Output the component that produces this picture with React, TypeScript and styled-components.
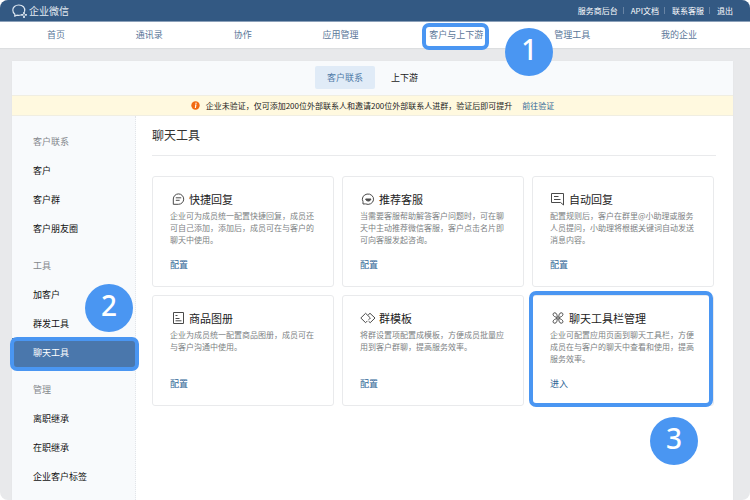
import React from "react";
import styled, { createGlobalStyle, css } from "styled-components";

const accent = "#4a96f2";
const linkBlue = "#2f6596";

const GlobalStyle = createGlobalStyle`
  * { box-sizing: border-box; }
  body {
    margin: 0;
    background: #fff;
    font-family: "Noto Sans CJK SC", "Noto Sans", sans-serif;
    font-size: 9px;
    color: #222;
  }
  a { color: inherit; text-decoration: none; }
  button { font: inherit; border: 0; background: none; padding: 0; cursor: pointer; }
  h1, h2, h3, p, ul { margin: 0; padding: 0; font-weight: 400; list-style: none; }
`;

const Page = styled.div`
  min-height: 100vh;
  display: flex;
  flex-direction: column;
  background: #e8e9eb;
  border-radius: 8px;
  overflow: hidden;
`;

const Header = styled.header`
  display: flex;
  align-items: center;
  justify-content: space-between;
  height: 22px;
  padding: 0 17px 0 12px;
  background: #335983;
  border-bottom: 1px solid #8ba0b9;
  color: #fff;
`;

const Brand = styled.a`
  display: flex;
  align-items: center;
  gap: 1px;
  font-size: 10px;
  line-height: 20px;
  color: #e3eaf2;
`;

const TopLinks = styled.ul`
  display: flex;
  align-items: center;
  font-size: 8px;
  line-height: 20px;
`;

const TopItem = styled.li`
  display: flex;
  align-items: center;
  & + &::before {
    content: "";
    height: 7px;
    margin: 0 7px 0 5px;
    border-left: 1px solid #6884a4;
  }
`;

const MainNav = styled.nav`
  display: flex;
  align-items: center;
  justify-content: space-between;
  height: 26px;
  padding: 0 53px 0 47px;
  background: #fff;
  box-shadow: 0 1px 1px #dcdee0;
  color: #5b7799;
`;

const NavLink = styled.a`
  position: relative;
  line-height: 26px;
`;

const Panel = styled.div`
  flex: 1;
  display: flex;
  flex-direction: column;
  margin: 13px 17px 0 12px;
  background: #fff;
  border-radius: 2px 2px 0 0;
  box-shadow: 0 0 1px #cfd2d6;
`;

const Tabs = styled.div`
  display: flex;
  justify-content: center;
  align-items: center;
  gap: 4px;
  height: 34px;
  padding-bottom: 1px;
  background: #f8fafc;
`;

const Tab = styled.button<{ $active?: boolean }>`
  height: 23px;
  padding: 0 12px;
  border-radius: 2px;
  color: ${(p) => (p.$active ? "#507ba8" : "#222")};
  ${(p) => p.$active && css`background: #e0ebf7;`}
`;

const Notice = styled.div`
  display: flex;
  justify-content: center;
  align-items: center;
  height: 21px;
  background: #fff9df;
  border: solid #f0eee2;
  border-width: 1px 0;
  font-size: 8px;
  svg { margin-right: 6px; }
  a { margin-left: 10px; color: ${linkBlue}; }
`;

const Body = styled.div`
  flex: 1;
  display: flex;
`;

const Sidebar = styled.aside`
  flex: none;
  width: 124px;
  padding: 11px 0 8px;
  background: #f8fafc;
  border-right: 1px dotted #e2e5e9;
`;

const Group = styled.section`
  & + & { margin-top: 8px; }
`;

const GroupTitle = styled.h2`
  padding-left: 21px;
  font-size: 9px;
  line-height: 29px;
  color: #85888c;
`;

const SideLink = styled.a<{ $active?: boolean }>`
  display: block;
  position: relative;
  padding-left: 21px;
  line-height: 29px;
  color: ${(p) => (p.$active ? "#fff" : "#111")};
  ${(p) => p.$active && css`background: #4a77ac;`}
`;

const Content = styled.main`
  flex: 1;
  min-width: 0;
  padding: 0 17px 16px 16px;
`;

const Title = styled.h1`
  height: 40px;
  font-size: 12px;
  line-height: 38px;
  color: #333;
  border-bottom: 1px solid #e9eaec;
`;

const Cards = styled.div`
  display: grid;
  grid-template-columns: repeat(3, 1fr);
  gap: 8px;
  margin: 20px 2px 0 0;
`;

const Card = styled.article`
  position: relative;
  display: flex;
  flex-direction: column;
  align-items: flex-start;
  min-height: 111px;
  padding: 12px 17px;
  border: 1px solid #e9eaec;
  border-radius: 3px;
`;

const CardTitle = styled.h3`
  display: flex;
  align-items: center;
  gap: 3px;
  font-size: 11px;
  line-height: 20px;
  color: #222;
  svg { flex: none; }
`;

const CardText = styled.p`
  min-height: 36px;
  margin-top: 1px;
  font-size: 8px;
  line-height: 12px;
  color: #7c7f83;
`;

const CardLink = styled.a`
  margin-top: 11px;
  line-height: 16px;
  color: ${linkBlue};
`;

const Ring = styled.span<{ $inset: string }>`
  position: absolute;
  inset: ${(p) => p.$inset};
  border: 4px solid ${accent};
  border-radius: 7px;
  pointer-events: none;
  z-index: 1;
`;

const Step = styled.span<{ $left: number; $top: number }>`
  position: absolute;
  left: ${(p) => p.$left}px;
  top: ${(p) => p.$top}px;
  z-index: 2;
  width: 48px;
  height: 48px;
  border-radius: 50%;
  background: ${accent};
  color: #fff;
  font: 500 28px/43px "Noto Sans", sans-serif;
  text-align: center;
`;

const Logo = () => (
  <svg width="16" height="16" viewBox="0 0 16 16" fill="none" stroke="#dce6f0" strokeWidth="1.2" strokeLinecap="round" strokeLinejoin="round">
    <path d="M12.6 8.4C13.4 4.6 10.8 2 6.8 2C3.2 2 .8 4.1.8 7.1C.8 9 1.6 10.4 2.9 11.3L2.7 13.2L4.8 12.2C6.2 12.5 7.6 12.4 8.8 12" />
    <path d="M12 9.6V10.4M14.2 11.8H13.6M12 14.2V13.4M9.8 11.8H10.6" strokeWidth="1.8" />
  </svg>
);

const InfoIcon = () => (
  <svg width="9" height="9" viewBox="0 0 9 9">
    <circle cx="4.5" cy="4.5" r="4.2" fill="#f26b12" />
    <path d="M4 4H4.9L4.3 7" fill="none" stroke="#fff" strokeWidth="1.1" />
    <circle cx="5" cy="2.3" r=".7" fill="#fff" />
  </svg>
);

const iconPaths: Record<string, React.ReactNode> = {
  reply: (
    <>
      <path d="M3.3 13.3V8A5.2 5.2 0 1 1 8.5 13.3Z" />
      <path d="M5.8 6.8H11.2M5.8 9.3H9.6" />
    </>
  ),
  service: (
    <>
      <path d="M3 13L3 10.6A5.6 5.2 0 1 1 5.6 12.9Z" />
      <path d="M5.6 8H11Q10.4 10.1 8.3 10.1Q6.2 10.1 5.6 8Z" fill="currentColor" />
    </>
  ),
  auto: (
    <>
      <path d="M1.5 2.5H13.5V14L10.6 11.5H1.5Z" />
      <path d="M4 5.5H8.5M4 8.5H10.5" />
    </>
  ),
  album: (
    <>
      <path d="M3.5 2.5H13.5V13.5H3.5Z" />
      <path d="M5.5 5.5H7.5M5.5 8.5H9.5M5.5 10.8H11.5" />
    </>
  ),
  template: (
    <>
      <path d="M7.4 10.9L5.6 12.7L.8 8L5.6 3.3L10.4 8L8.6 9.8" />
      <path d="M8.2 4.9L10 3.3L15 8L10.2 12.7L8.6 11.2" />
    </>
  ),
  toolbar: (
    <>
      <path d="M7.3 7.6C7.3 5 6.5 2.8 4.8 2.8C3.5 2.8 2.9 3.7 3.1 4.7C3.4 6.3 5.2 7 7.3 7.6Z" />
      <path d="M8.7 7.6C8.7 5 9.5 2.8 11.2 2.8C12.5 2.8 13.1 3.7 12.9 4.7C12.6 6.3 10.8 7 8.7 7.6Z" />
      <path d="M7.3 8.4C7.3 11 6.5 13.2 4.8 13.2C3.5 13.2 2.9 12.3 3.1 11.3C3.4 9.7 5.2 9 7.3 8.4Z" />
      <path d="M8.7 8.4C8.7 11 9.5 13.2 11.2 13.2C12.5 13.2 13.1 12.3 12.9 11.3C12.6 9.7 10.8 9 8.7 8.4Z" />
    </>
  ),
};

const IconSvg = styled.svg`
  color: #4a4a4a;
`;

const CardIcon = ({ name }: { name: string }) => (
  <IconSvg width="16" height="16" viewBox="0 0 16 16" fill="none" stroke="currentColor" strokeWidth="1" aria-hidden="true">
    {iconPaths[name]}
  </IconSvg>
);

const navItems = ["首页", "通讯录", "协作", "应用管理", "客户与上下游", "管理工具", "我的企业"];

const groups = [
  { title: "客户联系", items: ["客户", "客户群", "客户朋友圈"] },
  { title: "工具", items: ["加客户", "群发工具", "聊天工具"] },
  { title: "管理", items: ["离职继承", "在职继承", "企业客户标签"] },
];

const cards = [
  { icon: "reply", title: "快捷回复", text: "企业可为成员统一配置快捷回复，成员还可自己添加，添加后，成员可在与客户的聊天中使用。", link: "配置" },
  { icon: "service", title: "推荐客服", text: "当需要客服帮助解答客户问题时，可在聊天中主动推荐微信客服，客户点击名片即可向客服发起咨询。", link: "配置" },
  { icon: "auto", title: "自动回复", text: "配置规则后，客户在群里@小助理或服务人员提问，小助理将根据关键词自动发送消息内容。", link: "配置" },
  { icon: "album", title: "商品图册", text: "企业为成员统一配置商品图册，成员可在与客户沟通中使用。", link: "配置" },
  { icon: "template", title: "群模板", text: "将群设置项配置成模板，方便成员批量应用到客户群聊，提高服务效率。", link: "配置" },
  { icon: "toolbar", title: "聊天工具栏管理", text: "企业可配置应用页面到聊天工具栏，方便成员在与客户的聊天中查看和使用，提高服务效率。", link: "进入" },
];

export default function App() {
  return (
    <Page lang="zh-CN">
      <GlobalStyle />
      <Header>
        <Brand href="#"><Logo />企业微信</Brand>
        <TopLinks>
          {["服务商后台", "API文档", "联系客服", "退出"].map((t) => (
            <TopItem key={t}><a href="#">{t}</a></TopItem>
          ))}
        </TopLinks>
      </Header>
      <MainNav>
        {navItems.map((t) => (
          <NavLink key={t} href="#">
            {t}
            {t === "客户与上下游" && (
              <>
                <Ring $inset="1px -6px -2px -7px" />
                <Step $left={76} $top={6}>1</Step>
              </>
            )}
          </NavLink>
        ))}
      </MainNav>
      <Panel>
        <Tabs>
          <Tab $active>客户联系</Tab>
          <Tab>上下游</Tab>
        </Tabs>
        <Notice>
          <InfoIcon />
          <span>企业未验证，仅可添加200位外部联系人和邀请200位外部联系人进群，验证后即可提升</span>
          <a href="#">前往验证</a>
        </Notice>
        <Body>
          <Sidebar>
            {groups.map((g) => (
              <Group key={g.title}>
                <GroupTitle>{g.title}</GroupTitle>
                {g.items.map((t) => (
                  <SideLink key={t} href="#" $active={t === "聊天工具"}>
                    {t}
                    {t === "聊天工具" && (
                      <>
                        <Ring $inset="-1px -4px -4px -2px" />
                        <Step $left={73} $top={-54}>2</Step>
                      </>
                    )}
                  </SideLink>
                ))}
              </Group>
            ))}
          </Sidebar>
          <Content>
            <Title>聊天工具</Title>
            <Cards>
              {cards.map((c) => (
                <Card key={c.title}>
                  <CardTitle><CardIcon name={c.icon} />{c.title}</CardTitle>
                  <CardText>{c.text}</CardText>
                  <CardLink href="#">{c.link}</CardLink>
                  {c.icon === "toolbar" && (
                    <>
                      <Ring $inset="-5px 0 -2px -4px" />
                      <Step $left={117} $top={121}>3</Step>
                    </>
                  )}
                </Card>
              ))}
            </Cards>
          </Content>
        </Body>
      </Panel>
    </Page>
  );
}
